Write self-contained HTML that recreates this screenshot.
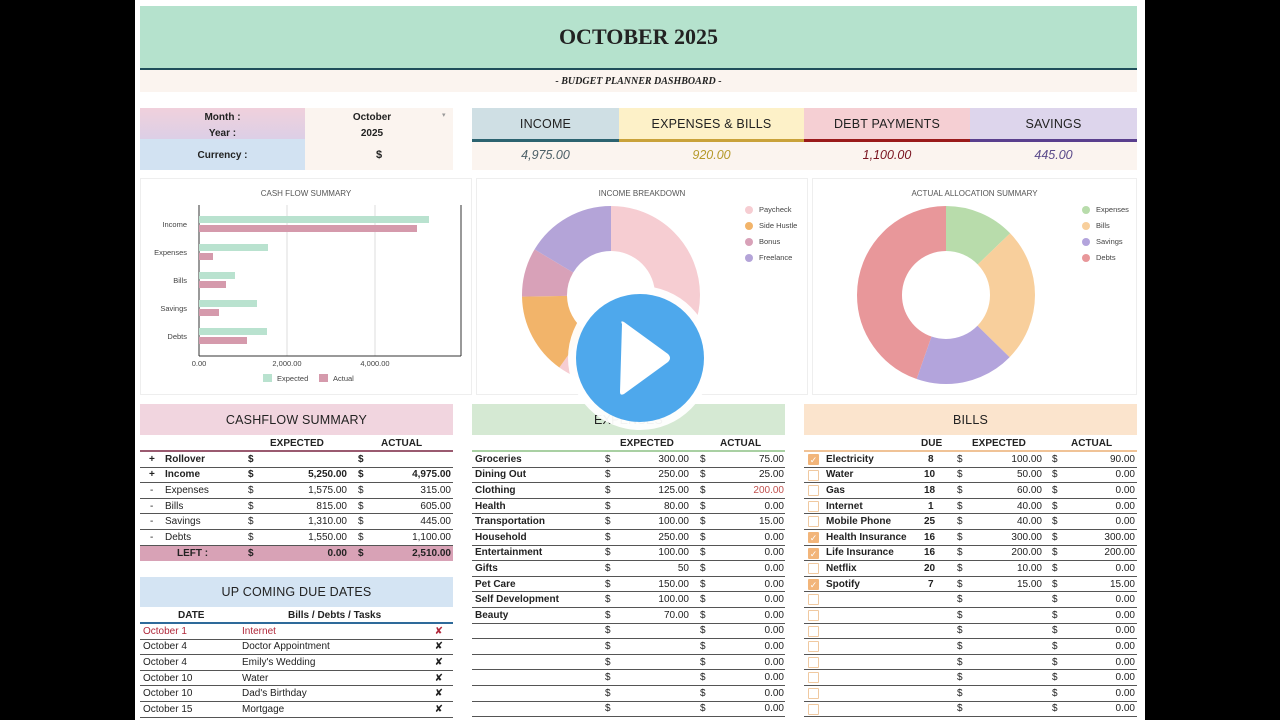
<!DOCTYPE html>
<html><head><meta charset="utf-8"><style>
*{margin:0;padding:0;box-sizing:border-box}
body{width:1280px;height:720px;background:#000;position:relative;overflow:hidden;font-family:"Liberation Sans",sans-serif;color:#222}
.pg{position:absolute;left:135px;top:0;width:1010px;height:720px;background:#fff}
.a{position:absolute}
.c{display:flex;align-items:center;justify-content:center}
.r{position:absolute;height:15.6px;display:flex;align-items:center;font-size:10px;border-bottom:1px solid #555}
.r span{position:absolute}
.b{font-weight:bold}
.th{position:absolute;font-size:10px;font-weight:bold}
.leg{position:absolute;font-size:7.5px;color:#444;display:flex;align-items:center}
.leg i{display:inline-block;width:8px;height:8px;border-radius:50%;margin-right:6px}
.cb{position:absolute;left:4px;top:2px;width:11px;height:11px;border:1px solid #f0c9a0;background:#fff;border-radius:1px;color:#fff;font-size:9px;line-height:10px;text-align:center;font-style:normal}
.cb.on{background:#f2b57a;border-color:#f2b57a}
.hd{font-size:12.5px;letter-spacing:.2px}
</style></head><body>
<div class="pg"></div>
<div class="a c" style="left:140px;top:6px;width:997px;height:62px;background:#b5e2cd;font-family:'Liberation Serif',serif;font-weight:bold;font-size:22px">OCTOBER 2025</div>
<div class="a" style="left:140px;top:68px;width:997px;height:2px;background:#1f4e5a"></div>
<div class="a c" style="left:140px;top:70px;width:997px;height:22px;background:#fbf4ef;font-family:'Liberation Serif',serif;font-style:italic;font-weight:bold;font-size:10px">- BUDGET PLANNER DASHBOARD -</div>
<div class="a" style="left:140px;top:108px;width:165px;height:31px;background:linear-gradient(#f0d0dc,#dccfe6)"></div>
<div class="a" style="left:140px;top:139px;width:165px;height:31px;background:#d2e2f2"></div>
<div class="a" style="left:305px;top:108px;width:148px;height:62px;background:#fbf4ef"></div>
<div class="a b" style="left:140px;top:110px;width:165px;text-align:center;font-size:10px;line-height:15.5px">Month :<br>Year :</div>
<div class="a b" style="left:140px;top:150px;width:165px;text-align:center;font-size:10px">Currency :</div>
<div class="a b" style="left:305px;top:110px;width:134px;text-align:center;font-size:10px;line-height:15.5px">October<br>2025</div>
<div class="a" style="left:442px;top:111px;font-size:7px;color:#999">▾</div>
<div class="a b" style="left:305px;top:149px;width:148px;text-align:center;font-size:11px">$</div>
<div class="a c hd" style="left:472px;top:108px;width:147px;height:31px;background:#cfdfe4">INCOME</div>
<div class="a c hd" style="left:619px;top:108px;width:185px;height:31px;background:#fdf1c8">EXPENSES &amp; BILLS</div>
<div class="a c hd" style="left:804px;top:108px;width:166px;height:31px;background:#f5cfd3">DEBT PAYMENTS</div>
<div class="a c hd" style="left:970px;top:108px;width:167px;height:31px;background:#ddd5ec">SAVINGS</div>
<div class="a" style="left:472px;top:139px;width:147px;height:3px;background:#2c6370"></div>
<div class="a" style="left:619px;top:139px;width:185px;height:3px;background:#c9a23a"></div>
<div class="a" style="left:804px;top:139px;width:166px;height:3px;background:#9a1a1a"></div>
<div class="a" style="left:970px;top:139px;width:167px;height:3px;background:#5a3f8e"></div>
<div class="a" style="left:472px;top:142px;width:665px;height:28px;background:#fbf4ef"></div>
<div class="a c" style="left:472px;top:142px;width:147px;height:26px;font-size:12.5px;font-style:italic;color:#4d6068">4,975.00</div>
<div class="a c" style="left:619px;top:142px;width:185px;height:26px;font-size:12.5px;font-style:italic;color:#b59a2a">920.00</div>
<div class="a c" style="left:804px;top:142px;width:166px;height:26px;font-size:12.5px;font-style:italic;color:#7a1420">1,100.00</div>
<div class="a c" style="left:970px;top:142px;width:167px;height:26px;font-size:12.5px;font-style:italic;color:#5a4a8a">445.00</div>
<div class="a" style="left:140px;top:178px;width:332px;height:217px;border:1px solid #eee"></div>
<div class="a" style="left:476px;top:178px;width:332px;height:217px;border:1px solid #eee"></div>
<div class="a" style="left:812px;top:178px;width:325px;height:217px;border:1px solid #eee"></div>
<div class="a" style="left:140px;top:189px;width:332px;text-align:center;font-size:8px;color:#555">CASH FLOW SUMMARY</div>
<div class="a" style="left:476px;top:189px;width:332px;text-align:center;font-size:8px;color:#555">INCOME BREAKDOWN</div>
<div class="a" style="left:812px;top:189px;width:325px;text-align:center;font-size:8px;color:#555">ACTUAL ALLOCATION SUMMARY</div>
<svg class="a" style="left:140px;top:178px" width="332" height="217">
<g stroke="#ddd"><line x1="147" y1="27" x2="147" y2="178"/><line x1="235" y1="27" x2="235" y2="178"/></g>
<line x1="59" y1="27" x2="59" y2="178" stroke="#333"/>
<line x1="59" y1="178" x2="321" y2="178" stroke="#333"/><line x1="321" y1="27" x2="321" y2="178" stroke="#333"/>
<g fill="#b9e2cf"><rect x="59" y="38" width="230" height="7"/><rect x="59" y="66" width="69" height="7"/><rect x="59" y="94" width="36" height="7"/><rect x="59" y="122" width="58" height="7"/><rect x="59" y="150" width="68" height="7"/></g>
<g fill="#d59aac"><rect x="59" y="47" width="218" height="7"/><rect x="59" y="75" width="14" height="7"/><rect x="59" y="103" width="27" height="7"/><rect x="59" y="131" width="20" height="7"/><rect x="59" y="159" width="48" height="7"/></g>
<g font-size="7.5" fill="#444" text-anchor="end" font-family="Liberation Sans"><text x="47" y="49">Income</text><text x="47" y="77">Expenses</text><text x="47" y="105">Bills</text><text x="47" y="133">Savings</text><text x="47" y="161">Debts</text></g>
<g font-size="7.5" fill="#444" text-anchor="middle" font-family="Liberation Sans"><text x="59" y="188">0.00</text><text x="147" y="188">2,000.00</text><text x="235" y="188">4,000.00</text></g>
<rect x="123" y="196" width="9" height="8" fill="#b9e2cf"/><text x="137" y="203" font-size="7.5" fill="#444" font-family="Liberation Sans">Expected</text>
<rect x="179" y="196" width="9" height="8" fill="#d59aac"/><text x="193" y="203" font-size="7.5" fill="#444" font-family="Liberation Sans">Actual</text>
</svg>
<svg class="a" style="left:476px;top:178px" width="332" height="217">
<g transform="translate(135,117) rotate(-90)" fill="none" stroke-width="45">
<circle r="66.5" stroke="#f6cdd2" stroke-dasharray="250 1000"/>
<circle r="66.5" stroke="#f2b46a" stroke-dasharray="62 1000" stroke-dashoffset="-250"/>
<circle r="66.5" stroke="#d8a1b8" stroke-dasharray="37 1000" stroke-dashoffset="-312"/>
<circle r="66.5" stroke="#b4a4d8" stroke-dasharray="70 1000" stroke-dashoffset="-349"/>
</g></svg>
<svg class="a" style="left:812px;top:178px" width="325" height="217">
<g transform="translate(134,117) rotate(-90)" fill="none" stroke-width="45">
<circle r="66.5" stroke="#b8dcab" stroke-dasharray="53.5 1000"/>
<circle r="66.5" stroke="#f8cf9c" stroke-dasharray="102.4 1000" stroke-dashoffset="-53.5"/>
<circle r="66.5" stroke="#b3a4dc" stroke-dasharray="75.3 1000" stroke-dashoffset="-155.9"/>
<circle r="66.5" stroke="#e8979a" stroke-dasharray="186.6 1000" stroke-dashoffset="-231.2"/>
</g></svg>
<div class="leg" style="left:745px;top:205px"><i style="background:#f6cdd2"></i>Paycheck</div>
<div class="leg" style="left:745px;top:221px"><i style="background:#f2b46a"></i>Side Hustle</div>
<div class="leg" style="left:745px;top:237px"><i style="background:#d8a1b8"></i>Bonus</div>
<div class="leg" style="left:745px;top:253px"><i style="background:#b4a4d8"></i>Freelance</div>
<div class="leg" style="left:1082px;top:205px"><i style="background:#b8dcab"></i>Expenses</div>
<div class="leg" style="left:1082px;top:221px"><i style="background:#f8cf9c"></i>Bills</div>
<div class="leg" style="left:1082px;top:237px"><i style="background:#b3a4dc"></i>Savings</div>
<div class="leg" style="left:1082px;top:253px"><i style="background:#e8979a"></i>Debts</div>

<div class="a c hd" style="left:140px;top:404px;width:313px;height:31px;background:#f1d5df">CASHFLOW SUMMARY</div>
<div class="a c hd" style="left:472px;top:404px;width:313px;height:31px;background:#d5e9d3">EXPENSES</div>
<div class="a c hd" style="left:804px;top:404px;width:333px;height:31px;background:#fbe4cd">BILLS</div>
<div class="a c hd" style="left:140px;top:577px;width:313px;height:30px;background:#d4e4f3">UP COMING DUE DATES</div>

<div class="th" style="left:270px;top:438px">EXPECTED</div><div class="th" style="left:381px;top:438px">ACTUAL</div>
<div class="a" style="left:140px;top:450px;width:313px;height:2px;background:#9a5a70"></div>
<div class="th" style="left:620px;top:438px">EXPECTED</div><div class="th" style="left:720px;top:438px">ACTUAL</div>
<div class="a" style="left:472px;top:450px;width:313px;height:2px;background:#a9d0a3"></div>
<div class="th" style="left:921px;top:438px">DUE</div><div class="th" style="left:972px;top:438px">EXPECTED</div><div class="th" style="left:1071px;top:438px">ACTUAL</div>
<div class="a" style="left:804px;top:450px;width:333px;height:2px;background:#f0c397"></div>
<div class="th" style="left:178px;top:610px">DATE</div><div class="th" style="left:288px;top:610px">Bills / Debts / Tasks</div>
<div class="a" style="left:140px;top:622px;width:313px;height:2px;background:#2e6a9a"></div>

<div style="position:absolute;left:140px;top:452px;width:313px">
<div class="r b" style="top:0;width:313px"><span style="left:9px">+</span><span style="left:25px">Rollover</span><span style="left:108px">$</span><span style="left:218px">$</span></div>
<div class="r b" style="top:15.6px;width:313px"><span style="left:9px">+</span><span style="left:25px">Income</span><span style="left:108px">$</span><span style="right:106px">5,250.00</span><span style="left:218px">$</span><span style="right:2px">4,975.00</span></div>
<div class="r" style="top:31.2px;width:313px"><span style="left:10px">-</span><span style="left:25px">Expenses</span><span style="left:108px">$</span><span style="right:106px">1,575.00</span><span style="left:218px">$</span><span style="right:2px">315.00</span></div>
<div class="r" style="top:46.8px;width:313px"><span style="left:10px">-</span><span style="left:25px">Bills</span><span style="left:108px">$</span><span style="right:106px">815.00</span><span style="left:218px">$</span><span style="right:2px">605.00</span></div>
<div class="r" style="top:62.4px;width:313px"><span style="left:10px">-</span><span style="left:25px">Savings</span><span style="left:108px">$</span><span style="right:106px">1,310.00</span><span style="left:218px">$</span><span style="right:2px">445.00</span></div>
<div class="r" style="top:78px;width:313px"><span style="left:10px">-</span><span style="left:25px">Debts</span><span style="left:108px">$</span><span style="right:106px">1,550.00</span><span style="left:218px">$</span><span style="right:2px">1,100.00</span></div>
<div class="r b" style="top:93.6px;width:313px;background:#d8a2b6;border:none"><span style="left:37px">LEFT :</span><span style="left:108px">$</span><span style="right:106px">0.00</span><span style="left:218px">$</span><span style="right:2px">2,510.00</span></div>
</div>
<div style="position:absolute;left:140px;top:624px;width:313px">
<div class="r" style="top:0;width:313px;color:#b0283a"><span style="left:3px">October 1</span><span style="left:102px">Internet</span><span style="right:10px">✘</span></div>
<div class="r" style="top:15.6px;width:313px"><span style="left:3px">October 4</span><span style="left:102px">Doctor Appointment</span><span style="right:10px">✘</span></div>
<div class="r" style="top:31.2px;width:313px"><span style="left:3px">October 4</span><span style="left:102px">Emily's Wedding</span><span style="right:10px">✘</span></div>
<div class="r" style="top:46.8px;width:313px"><span style="left:3px">October 10</span><span style="left:102px">Water</span><span style="right:10px">✘</span></div>
<div class="r" style="top:62.4px;width:313px"><span style="left:3px">October 10</span><span style="left:102px">Dad's Birthday</span><span style="right:10px">✘</span></div>
<div class="r" style="top:78px;width:313px"><span style="left:3px">October 15</span><span style="left:102px">Mortgage</span><span style="right:10px">✘</span></div>
</div>
<div style="position:absolute;left:472px;top:452px;width:313px">
<div class="r" style="top:0;width:313px"><span class="b" style="left:3px">Groceries</span><span style="left:133px">$</span><span style="right:96px">300.00</span><span style="left:228px">$</span><span style="right:1px">75.00</span></div>
<div class="r" style="top:15.6px;width:313px"><span class="b" style="left:3px">Dining Out</span><span style="left:133px">$</span><span style="right:96px">250.00</span><span style="left:228px">$</span><span style="right:1px">25.00</span></div>
<div class="r" style="top:31.2px;width:313px"><span class="b" style="left:3px">Clothing</span><span style="left:133px">$</span><span style="right:96px">125.00</span><span style="left:228px">$</span><span style="right:1px;color:#c0504d">200.00</span></div>
<div class="r" style="top:46.8px;width:313px"><span class="b" style="left:3px">Health</span><span style="left:133px">$</span><span style="right:96px">80.00</span><span style="left:228px">$</span><span style="right:1px">0.00</span></div>
<div class="r" style="top:62.4px;width:313px"><span class="b" style="left:3px">Transportation</span><span style="left:133px">$</span><span style="right:96px">100.00</span><span style="left:228px">$</span><span style="right:1px">15.00</span></div>
<div class="r" style="top:78px;width:313px"><span class="b" style="left:3px">Household</span><span style="left:133px">$</span><span style="right:96px">250.00</span><span style="left:228px">$</span><span style="right:1px">0.00</span></div>
<div class="r" style="top:93.6px;width:313px"><span class="b" style="left:3px">Entertainment</span><span style="left:133px">$</span><span style="right:96px">100.00</span><span style="left:228px">$</span><span style="right:1px">0.00</span></div>
<div class="r" style="top:109.2px;width:313px"><span class="b" style="left:3px">Gifts</span><span style="left:133px">$</span><span style="right:96px">50</span><span style="left:228px">$</span><span style="right:1px">0.00</span></div>
<div class="r" style="top:124.8px;width:313px"><span class="b" style="left:3px">Pet Care</span><span style="left:133px">$</span><span style="right:96px">150.00</span><span style="left:228px">$</span><span style="right:1px">0.00</span></div>
<div class="r" style="top:140.4px;width:313px"><span class="b" style="left:3px">Self Development</span><span style="left:133px">$</span><span style="right:96px">100.00</span><span style="left:228px">$</span><span style="right:1px">0.00</span></div>
<div class="r" style="top:156px;width:313px"><span class="b" style="left:3px">Beauty</span><span style="left:133px">$</span><span style="right:96px">70.00</span><span style="left:228px">$</span><span style="right:1px">0.00</span></div>
<div class="r" style="top:171.6px;width:313px"><span style="left:133px">$</span><span style="left:228px">$</span><span style="right:1px">0.00</span></div>
<div class="r" style="top:187.2px;width:313px"><span style="left:133px">$</span><span style="left:228px">$</span><span style="right:1px">0.00</span></div>
<div class="r" style="top:202.8px;width:313px"><span style="left:133px">$</span><span style="left:228px">$</span><span style="right:1px">0.00</span></div>
<div class="r" style="top:218.4px;width:313px"><span style="left:133px">$</span><span style="left:228px">$</span><span style="right:1px">0.00</span></div>
<div class="r" style="top:234px;width:313px"><span style="left:133px">$</span><span style="left:228px">$</span><span style="right:1px">0.00</span></div>
<div class="r" style="top:249.6px;width:313px"><span style="left:133px">$</span><span style="left:228px">$</span><span style="right:1px">0.00</span></div>
</div>
<div style="position:absolute;left:804px;top:452px;width:333px">
<div class="r" style="top:0;width:333px"><i class="cb on">✓</i><span class="b" style="left:22px">Electricity</span><span class="b" style="left:124px">8</span><span style="left:153px">$</span><span style="right:95px">100.00</span><span style="left:248px">$</span><span style="right:2px">90.00</span></div>
<div class="r" style="top:15.6px;width:333px"><i class="cb"></i><span class="b" style="left:22px">Water</span><span class="b" style="left:120px">10</span><span style="left:153px">$</span><span style="right:95px">50.00</span><span style="left:248px">$</span><span style="right:2px">0.00</span></div>
<div class="r" style="top:31.2px;width:333px"><i class="cb"></i><span class="b" style="left:22px">Gas</span><span class="b" style="left:120px">18</span><span style="left:153px">$</span><span style="right:95px">60.00</span><span style="left:248px">$</span><span style="right:2px">0.00</span></div>
<div class="r" style="top:46.8px;width:333px"><i class="cb"></i><span class="b" style="left:22px">Internet</span><span class="b" style="left:124px">1</span><span style="left:153px">$</span><span style="right:95px">40.00</span><span style="left:248px">$</span><span style="right:2px">0.00</span></div>
<div class="r" style="top:62.4px;width:333px"><i class="cb"></i><span class="b" style="left:22px">Mobile Phone</span><span class="b" style="left:120px">25</span><span style="left:153px">$</span><span style="right:95px">40.00</span><span style="left:248px">$</span><span style="right:2px">0.00</span></div>
<div class="r" style="top:78px;width:333px"><i class="cb on">✓</i><span class="b" style="left:22px">Health Insurance</span><span class="b" style="left:120px">16</span><span style="left:153px">$</span><span style="right:95px">300.00</span><span style="left:248px">$</span><span style="right:2px">300.00</span></div>
<div class="r" style="top:93.6px;width:333px"><i class="cb on">✓</i><span class="b" style="left:22px">Life Insurance</span><span class="b" style="left:120px">16</span><span style="left:153px">$</span><span style="right:95px">200.00</span><span style="left:248px">$</span><span style="right:2px">200.00</span></div>
<div class="r" style="top:109.2px;width:333px"><i class="cb"></i><span class="b" style="left:22px">Netflix</span><span class="b" style="left:120px">20</span><span style="left:153px">$</span><span style="right:95px">10.00</span><span style="left:248px">$</span><span style="right:2px">0.00</span></div>
<div class="r" style="top:124.8px;width:333px"><i class="cb on">✓</i><span class="b" style="left:22px">Spotify</span><span class="b" style="left:124px">7</span><span style="left:153px">$</span><span style="right:95px">15.00</span><span style="left:248px">$</span><span style="right:2px">15.00</span></div>
<div class="r" style="top:140.4px;width:333px"><i class="cb"></i><span style="left:153px">$</span><span style="left:248px">$</span><span style="right:2px">0.00</span></div>
<div class="r" style="top:156px;width:333px"><i class="cb"></i><span style="left:153px">$</span><span style="left:248px">$</span><span style="right:2px">0.00</span></div>
<div class="r" style="top:171.6px;width:333px"><i class="cb"></i><span style="left:153px">$</span><span style="left:248px">$</span><span style="right:2px">0.00</span></div>
<div class="r" style="top:187.2px;width:333px"><i class="cb"></i><span style="left:153px">$</span><span style="left:248px">$</span><span style="right:2px">0.00</span></div>
<div class="r" style="top:202.8px;width:333px"><i class="cb"></i><span style="left:153px">$</span><span style="left:248px">$</span><span style="right:2px">0.00</span></div>
<div class="r" style="top:218.4px;width:333px"><i class="cb"></i><span style="left:153px">$</span><span style="left:248px">$</span><span style="right:2px">0.00</span></div>
<div class="r" style="top:234px;width:333px"><i class="cb"></i><span style="left:153px">$</span><span style="left:248px">$</span><span style="right:2px">0.00</span></div>
<div class="r" style="top:249.6px;width:333px"><i class="cb"></i><span style="left:153px">$</span><span style="left:248px">$</span><span style="right:2px">0.00</span></div>
</div>
<svg class="a" style="left:564px;top:282px" width="152" height="152">
<circle cx="76" cy="76" r="72" fill="#fff" opacity="0.95"/>
<circle cx="76" cy="76" r="64" fill="#4ea8ec"/>
<path d="M58 42 Q56 38 60 40 L104 72 Q108 76 104 80 L60 112 Q56 114 56 110 Z" fill="#fff"/>
</svg>
</body></html>
